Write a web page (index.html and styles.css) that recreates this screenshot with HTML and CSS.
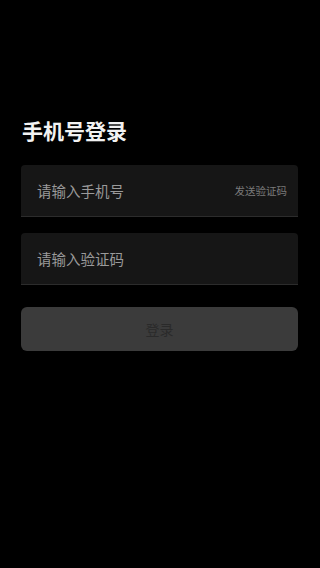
FILE: index.html
```html
<!DOCTYPE html>
<html lang="zh">
<head>
<meta charset="utf-8">
<meta name="viewport" content="width=device-width, initial-scale=1">
<title>手机号登录</title>
<link rel="stylesheet" href="styles.css">
</head>
<body>
<main class="page">
  <h1 class="title">手机号登录</h1>
  <div class="field">
    <span class="placeholder">请输入手机号</span>
    <span class="send">发送验证码</span>
  </div>
  <div class="field">
    <span class="placeholder">请输入验证码</span>
  </div>
  <div class="btn">登录</div>
</main>
</body>
</html>
```
FILE: styles.css
```css
html, body {
  margin: 0;
  padding: 0;
  background: #000;
  height: 100%;
}
body {
  font-family: "Noto Sans CJK SC", "Noto Sans", sans-serif;
}
.page {
  padding: 116px 22px 0 21px;
  display: flex;
  flex-direction: column;
}
.title {
  margin: 0 0 0 1px;
  font-size: 21px;
  line-height: 28px;
  font-weight: 700;
  color: #f2f2f2;
}
.field {
  margin-top: 21px;
  height: 52px;
  box-sizing: border-box;
  background: #161616;
  border-radius: 4px 4px 0 0;
  border-bottom: 1px solid #2c2c2c;
  display: flex;
  align-items: center;
  justify-content: space-between;
  padding: 0 11px 0 16px;
}
.field + .field {
  margin-top: 16px;
}
.placeholder {
  font-size: 14.5px;
  color: #9a9a9a;
}
.send {
  font-size: 10.5px;
  color: #7a7a7a;
}
.btn {
  margin-top: 22px;
  height: 44px;
  border-radius: 6px;
  background: #3b3b3b;
  color: #2a2a2a;
  font-size: 14px;
  display: flex;
  align-items: center;
  justify-content: center;
}
```
